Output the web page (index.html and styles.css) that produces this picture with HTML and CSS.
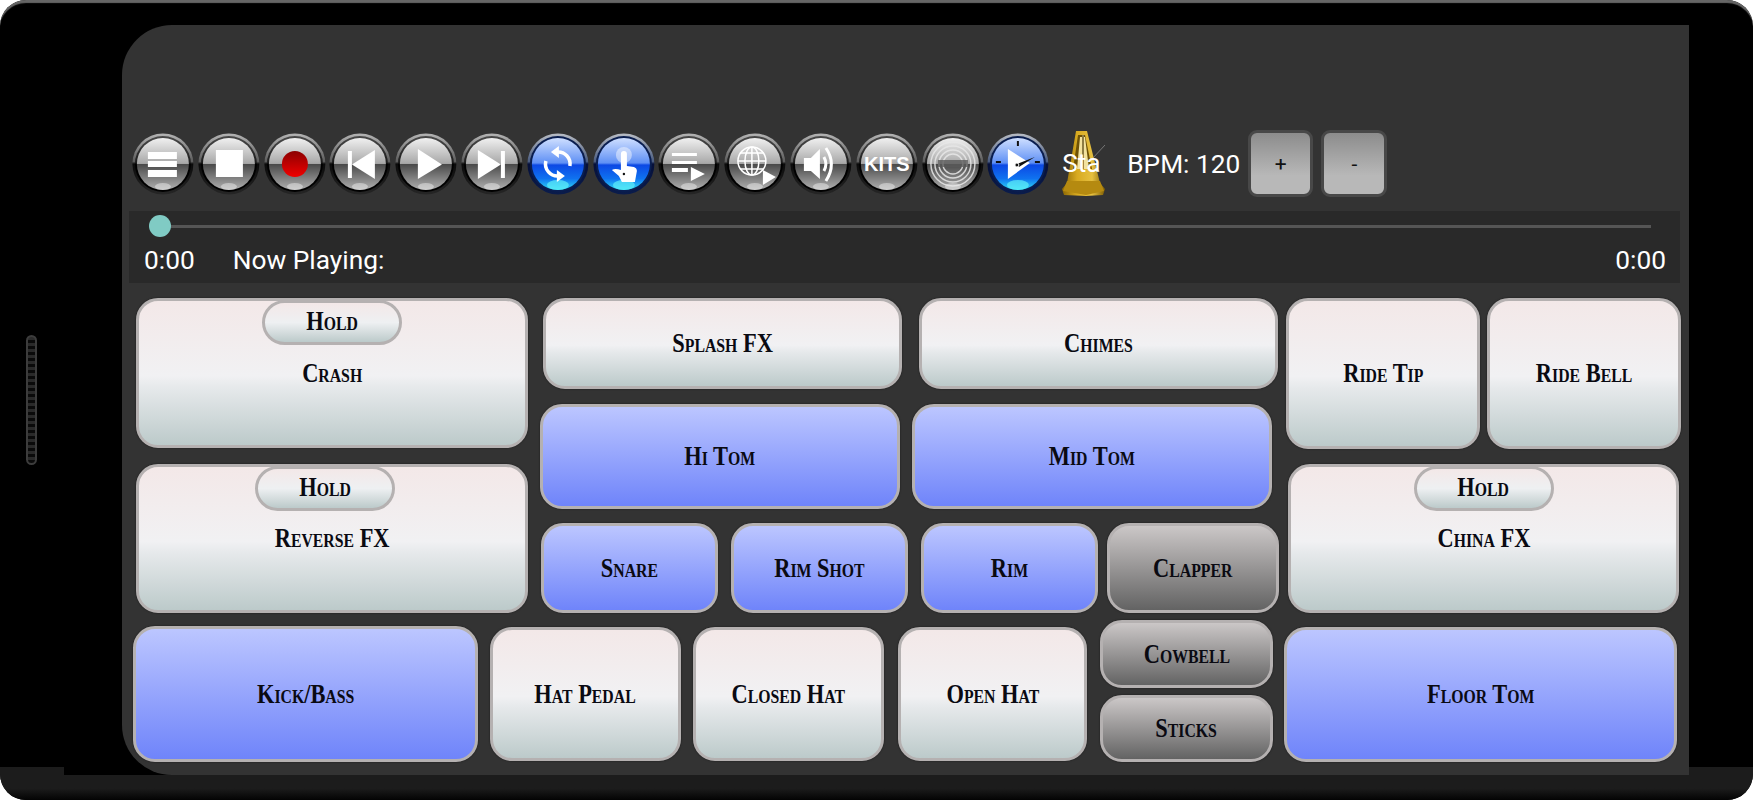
FILE: index.html
```html
<!DOCTYPE html>
<html lang="en">
<head>
  <meta charset="UTF-8" />
  <title>Drum Pads</title>
  <link rel="stylesheet" href="styles.css">
</head>
<body>
  <svg class="defs" width="0" height="0">
    <defs>
      <linearGradient id="rimGray" x1="0" y1="0" x2="0" y2="1">
        <stop offset="0" stop-color="#b4b4b4"/>
        <stop offset="0.46" stop-color="#5c5c5c"/>
        <stop offset="0.5" stop-color="#0a0a0a"/>
        <stop offset="1" stop-color="#262626"/>
      </linearGradient>
      <linearGradient id="ringGray" x1="0" y1="0" x2="0" y2="1">
        <stop offset="0" stop-color="#4a4a4a"/>
        <stop offset="0.48" stop-color="#1c1c1c"/>
        <stop offset="0.5" stop-color="#000"/>
        <stop offset="1" stop-color="#000"/>
      </linearGradient>
      <linearGradient id="discGray" x1="0" y1="0" x2="0" y2="1">
        <stop offset="0" stop-color="#f0f0f0"/>
        <stop offset="0.49" stop-color="#a8a8a8"/>
        <stop offset="0.5" stop-color="#484848"/>
        <stop offset="1" stop-color="#b0b0b0"/>
      </linearGradient>
      <linearGradient id="rimBlue" x1="0" y1="0" x2="0" y2="1">
        <stop offset="0" stop-color="#b8bcc4"/>
        <stop offset="0.46" stop-color="#4a5c80"/>
        <stop offset="0.5" stop-color="#06103a"/>
        <stop offset="1" stop-color="#0a1c4c"/>
      </linearGradient>
      <linearGradient id="discBlue" x1="0" y1="0" x2="0" y2="1">
        <stop offset="0" stop-color="#cfdfff"/>
        <stop offset="0.48" stop-color="#5f90f5"/>
        <stop offset="0.52" stop-color="#0c48e4"/>
        <stop offset="0.78" stop-color="#0f72f0"/>
        <stop offset="1" stop-color="#2fdcf5"/>
      </linearGradient>
      <linearGradient id="redDot" x1="0" y1="0" x2="0" y2="1">
        <stop offset="0" stop-color="#8c0000"/>
        <stop offset="1" stop-color="#f00000"/>
      </linearGradient>
      <linearGradient id="gold" x1="0" y1="0" x2="1" y2="0">
        <stop offset="0" stop-color="#8a6604"/>
        <stop offset="0.35" stop-color="#d8aa20"/>
        <stop offset="0.7" stop-color="#e6c040"/>
        <stop offset="1" stop-color="#7d5c02"/>
      </linearGradient>
      <symbol id="glass" viewBox="0 0 62 62">
        <circle cx="31" cy="31" r="30.5" fill="url(#rimGray)"/>
        <circle cx="31" cy="31" r="28" fill="url(#ringGray)"/>
        <circle cx="31" cy="31" r="26" fill="url(#discGray)"/>
        <ellipse cx="31" cy="53.500" rx="8" ry="3.500" fill="#fff" opacity="0.4"/>
      </symbol>
      <symbol id="glass-blue" viewBox="0 0 62 62">
        <circle cx="31" cy="31" r="30.5" fill="url(#rimBlue)"/>
        <circle cx="31" cy="31" r="28" fill="#0a1e50"/>
        <circle cx="31" cy="31" r="26" fill="url(#discBlue)"/>
        <ellipse cx="31" cy="52" rx="11" ry="5" fill="#5ff0f8" opacity="0.7"/>
      </symbol>
    </defs>
  </svg>

  <div class="device">
    <div class="grille"></div>
    <div class="chin"></div>
    <div class="backing">
      <div class="screen">

        <div class="toolbar">
          <svg class="tool" viewBox="0 0 62 62"><use href="#glass"/><g fill="#fff"><rect x="16" y="19" width="29" height="7"/><rect x="16" y="28" width="29" height="6"/><rect x="16" y="37" width="29" height="7"/></g></svg>
          <svg class="tool" viewBox="0 0 62 62"><use href="#glass"/><rect x="18" y="17" width="27" height="27" fill="#fff"/></svg>
          <svg class="tool" viewBox="0 0 62 62"><use href="#glass"/><circle cx="31" cy="31" r="13" fill="url(#redDot)"/></svg>
          <svg class="tool" viewBox="0 0 62 62"><use href="#glass"/><g fill="#fff"><rect x="19" y="18" width="4" height="27"/><polygon points="23,31.500 46,17 46,46"/></g></svg>
          <svg class="tool" viewBox="0 0 62 62"><use href="#glass"/><polygon points="23,16 47,31.500 23,46" fill="#fff"/></svg>
          <svg class="tool" viewBox="0 0 62 62"><use href="#glass"/><g fill="#fff"><polygon points="17,17 40,31.500 17,46"/><rect x="40" y="18" width="4" height="27"/></g></svg>
          <svg class="tool" viewBox="0 0 62 62"><use href="#glass-blue"/><g fill="none" stroke="#fff" stroke-width="3.500"><path d="M30 19 a12 12 0 0 1 13 14"/><path d="M32 43 a12 12 0 0 1 -13 -15"/></g><g fill="#fff"><polygon points="24,19 32,13 32,25"/><polygon points="38,43 30,49 30,37"/></g></svg>
          <svg class="tool" viewBox="0 0 62 62"><use href="#glass-blue"/><circle cx="31" cy="22" r="8" fill="#fff" opacity="0.45"/><path d="M28 21 a3 3 0 0 1 6 0 v12 l7 1 q3 1 3 4 l-2 11 h-13 l-3 -6 l-7 -6 q3 -2 9 0z" fill="#fff"/><circle cx="31" cy="41" r="1.200" fill="#111"/></svg>
          <svg class="tool" viewBox="0 0 62 62"><use href="#glass"/><g fill="#fff"><rect x="14" y="20" width="25" height="3"/><rect x="14" y="28" width="25" height="3"/><rect x="14" y="35" width="16" height="4"/><polygon points="33,34 47,41 33,48"/></g></svg>
          <svg class="tool" viewBox="0 0 62 62"><use href="#glass"/><g fill="none" stroke="#fff" stroke-width="1.500"><circle cx="28" cy="28" r="14"/><ellipse cx="28" cy="28" rx="7" ry="14"/><line x1="28" y1="14" x2="28" y2="42"/><line x1="14" y1="28" x2="42" y2="28"/><path d="M16 20 h24 M16 36 h24"/></g><polygon points="39,37 52,44 39,52" fill="#fff"/></svg>
          <svg class="tool" viewBox="0 0 62 62"><use href="#glass"/><polygon points="14,25 21,25 30,16 30,46 21,38 14,38" fill="#fff"/><g fill="none" stroke="#fff"><path d="M34 24 q4 7 0 14" stroke-width="3"/><path d="M36 15 q11 16 0 33" stroke-width="3"/></g></svg>
          <svg class="tool" viewBox="0 0 62 62"><use href="#glass"/><text class="kits" x="31" y="38" text-anchor="middle">KITS</text></svg>
          <svg class="tool" viewBox="0 0 62 62"><use href="#glass"/><g fill="none" stroke="#e8e8e8" stroke-width="1.500" opacity="0.85"><circle cx="31" cy="31" r="10"/><circle cx="31" cy="31" r="14"/><circle cx="31" cy="31" r="18"/><circle cx="31" cy="31" r="22"/></g><rect x="16" y="27" width="30" height="7" fill="#5a5a5a" opacity="0.8"/></svg>
          <svg class="tool" viewBox="0 0 62 62"><use href="#glass-blue"/><g stroke="#111" stroke-width="2"><line x1="31" y1="8" x2="31" y2="13"/><line x1="9" y1="29" x2="14" y2="29"/><line x1="48" y1="29" x2="53" y2="29"/></g><polygon points="21,16 43,30 21,46" fill="#fff"/><polygon points="30,31 48,24 32,34" fill="#111"/><circle cx="30" cy="32" r="2" fill="#111" stroke="#fff"/></svg>

          <div class="metronome">
            <svg class="metronome-art" viewBox="0 0 43 65">
              <line x1="30" y1="28" x2="43" y2="14" stroke="#777" stroke-width="1"/>
              <polygon points="14,0 25,0 38,52 43,58 41,64 24,65 2,64 0,58 5,52" fill="url(#gold)"/>
              <polygon points="16,4 23,4 30,38 11,38" fill="#6e5206"/>
              <polygon points="18,6 23,6 27,38 15,38" fill="#f2e29e"/>
              <rect x="20" y="4" width="2" height="34" fill="#8c7c44"/>
              <polygon points="5,50 38,50 42,60 24,64 1,60" fill="#b58a10"/>
            </svg>
            <span class="metronome-label">Sta</span>
          </div>
          <span class="bpm">BPM: 120</span>
          <button class="step step-plus">+</button>
          <button class="step step-minus">-</button>
        </div>

        <div class="seek">
          <div class="track"><div class="thumb"></div></div>
          <div class="times">
            <span>0:00</span>
            <span class="now">Now Playing:</span>
            <span class="end">0:00</span>
          </div>
        </div>

        <div class="pads-top">
          <div class="col-left">
            <div class="pad white crash"><span class="label">Crash</span><div class="hold"><span class="label">Hold</span></div></div>
            <div class="pad white reverse"><span class="label">Reverse FX</span><div class="hold hold-reverse"><span class="label">Hold</span></div></div>
          </div>
          <div class="col-mid">
            <div class="row row-fx">
              <div class="pad white splash"><span class="label">Splash FX</span></div>
              <div class="pad white chimes"><span class="label">Chimes</span></div>
            </div>
            <div class="row row-toms">
              <div class="pad blue hi-tom"><span class="label">Hi Tom</span></div>
              <div class="pad blue mid-tom"><span class="label">Mid Tom</span></div>
            </div>
            <div class="row row-snare">
              <div class="pad blue snare"><span class="label">Snare</span></div>
              <div class="pad blue rim-shot"><span class="label">Rim Shot</span></div>
              <div class="pad blue rim"><span class="label">Rim</span></div>
              <div class="pad gray clapper"><span class="label">Clapper</span></div>
            </div>
          </div>
          <div class="col-right">
            <div class="row">
              <div class="pad white ride-tip"><span class="label">Ride Tip</span></div>
              <div class="pad white ride-bell"><span class="label">Ride Bell</span></div>
            </div>
            <div class="pad white china"><span class="label">China FX</span><div class="hold"><span class="label">Hold</span></div></div>
          </div>
        </div>

        <div class="pads-bottom">
          <div class="pad blue kick"><span class="label">Kick/Bass</span></div>
          <div class="pad white hat hat-pedal"><span class="label">Hat Pedal</span></div>
          <div class="pad white hat closed-hat"><span class="label">Closed Hat</span></div>
          <div class="pad white hat open-hat"><span class="label">Open Hat</span></div>
          <div class="stack">
            <div class="pad gray cowbell"><span class="label">Cowbell</span></div>
            <div class="pad gray sticks"><span class="label">Sticks</span></div>
          </div>
          <div class="pad blue floor-tom"><span class="label">Floor Tom</span></div>
        </div>

      </div>
    </div>
  </div>
</body>
</html>
```

FILE: styles.css
```css
* {
  box-sizing: border-box;
}

body {
  margin: 0;
  background: white;
  font-family: Roboto, sans-serif;
}

.defs {
  display: block;
  height: 0;
}

.device {
  position: relative;
  height: 800px;
  padding: 25px 64px;
  background: black;
  border-radius: 26px;
  overflow: hidden;
  box-shadow: inset 0 4px 1px -1px #666;
}

.chin {
  position: absolute;
  left: 0;
  right: 0;
  bottom: 0;
  height: 33px;
  background: linear-gradient(#1c1c1c, #1c1c1c 65%, #030303);
}

.grille {
  position: absolute;
  left: 26px;
  top: 335px;
  width: 11px;
  height: 130px;
  border: 2px solid #3c3c3c;
  border-radius: 6px;
  background: repeating-linear-gradient(#2a2a2a 0 3px, #0a0a0a 3px 6px);
}

.backing {
  position: relative;
  height: 750px;
  padding-left: 58px;
  background: black;
}

.screen {
  height: 750px;
  padding-top: 105px;
  background: #333;
  border-radius: 50px 0 0 50px;
  overflow: hidden;
}

.toolbar {
  display: flex;
  align-items: center;
  height: 67px;
  padding-left: 8px;
  color: white;
}

.tool {
  flex: none;
  width: 65.8px;
  height: 62px;
}

.kits {
  font-family: "Liberation Sans", sans-serif;
  font-size: 20px;
  font-weight: bold;
  fill: white;
}

.metronome {
  position: relative;
  flex: none;
  width: 43px;
  height: 65px;
  margin-left: 11px;
}

.metronome-art {
  display: block;
  width: 43px;
  height: 65px;
}

.metronome-label {
  position: absolute;
  left: 0;
  top: 18px;
  font-size: 26.3px;
  line-height: 29px;
}

.bpm {
  margin-left: 22px;
  font-size: 26.3px;
  white-space: nowrap;
}

.step {
  flex: none;
  width: 65px;
  height: 67px;
  padding: 0;
  border: 3px solid #484848;
  border-radius: 9px;
  background: linear-gradient(#8c8c8c, #b8b8b8 70%);
  color: #111;
  font-family: Roboto, sans-serif;
  font-size: 21px;
}

.step-plus {
  margin-left: 8px;
}

.step-minus {
  width: 66px;
  margin-left: 8px;
}

.seek {
  height: 72px;
  margin: 14px 9px 0 7px;
  padding-top: 14px;
  background: #292929;
  color: white;
}

.track {
  position: relative;
  height: 3px;
  margin: 0 29px 0 31px;
  background: #555;
}

.thumb {
  position: absolute;
  left: -11px;
  top: -10px;
  width: 22px;
  height: 22px;
  border-radius: 50%;
  background: #80cbc4;
}

.times {
  display: flex;
  margin-top: 18px;
  padding: 0 14px 0 15px;
  font-size: 26.3px;
  line-height: 29px;
}

.now {
  margin-left: 38px;
}

.end {
  margin-left: auto;
}

.pad {
  position: relative;
  display: flex;
  flex: none;
  align-items: center;
  justify-content: center;
  border: 3px solid #b5b1b1;
  border-radius: 22px;
  box-shadow: 0 0 2px rgba(0, 0, 0, 0.6);
  color: #0a0a12;
  font-family: "Liberation Serif", serif;
  font-size: 27px;
  font-variant: small-caps;
  font-weight: bold;
  white-space: nowrap;
}

.label {
  display: inline-block;
  transform: scaleX(0.83);
}

.white {
  background: linear-gradient(#f3e8e8, #f1f1f3 52%, #e6e9eb 60%, #bccaca);
}

.blue {
  background: linear-gradient(#bcc6ff, #6f84fa);
}

.gray {
  background: linear-gradient(#cbc7c7, #636363);
}

.hold {
  position: absolute;
  top: -1px;
  left: 50%;
  width: 140px;
  height: 45px;
  margin-left: -70px;
  padding-bottom: 3px;
  display: flex;
  align-items: center;
  justify-content: center;
  border: 3px solid #b5b1b1;
  border-radius: 23px;
  background: linear-gradient(#f3e8e8, #eef0f2 50%, #bccaca);
}

.hold-reverse {
  margin-left: -77px;
}

.pads-top {
  display: flex;
  margin: 15px 0 0 14px;
}

.col-left {
  display: flex;
  flex: none;
  flex-direction: column;
  gap: 16px;
  width: 392px;
}

.crash {
  height: 150px;
}

.reverse {
  height: 149px;
}

.col-mid {
  flex: none;
  width: 739px;
  margin-left: 12px;
}

.col-right {
  flex: none;
  margin-left: 7px;
}

.row {
  display: flex;
}

.row-fx {
  gap: 17px;
  margin-left: 3px;
}

.splash,
.chimes {
  width: 359px;
  height: 91px;
}

.row-toms {
  gap: 12px;
  margin-top: 15px;
}

.hi-tom {
  width: 360px;
  height: 105px;
}

.mid-tom {
  width: 360px;
  height: 105px;
}

.row-snare {
  gap: 13px;
  margin: 14px 0 0 1px;
}

.snare,
.rim-shot,
.rim {
  width: 177px;
  height: 90px;
}

.clapper {
  width: 172px;
  height: 90px;
  margin-left: -4px;
}

.ride-tip,
.ride-bell {
  width: 194px;
  height: 151px;
}

.ride-bell {
  margin-left: 7px;
}

.china {
  width: 391px;
  height: 149px;
  margin: 15px 0 0 2px;
}

.pads-bottom {
  display: flex;
  align-items: flex-end;
  height: 142px;
  margin: 7px 0 0 11px;
}

.kick {
  width: 345px;
  height: 136px;
}

.hat {
  height: 134px;
  margin-bottom: 1px;
}

.hat-pedal {
  width: 191px;
  margin-left: 12px;
}

.closed-hat {
  width: 191px;
  margin-left: 12px;
}

.open-hat {
  width: 189px;
  margin-left: 14px;
}

.stack {
  flex: none;
  margin-left: 13px;
}

.cowbell {
  width: 173px;
  height: 68px;
}

.sticks {
  width: 173px;
  height: 67px;
  margin-top: 7px;
}

.floor-tom {
  width: 393px;
  height: 135px;
  margin-left: 11px;
}
```
